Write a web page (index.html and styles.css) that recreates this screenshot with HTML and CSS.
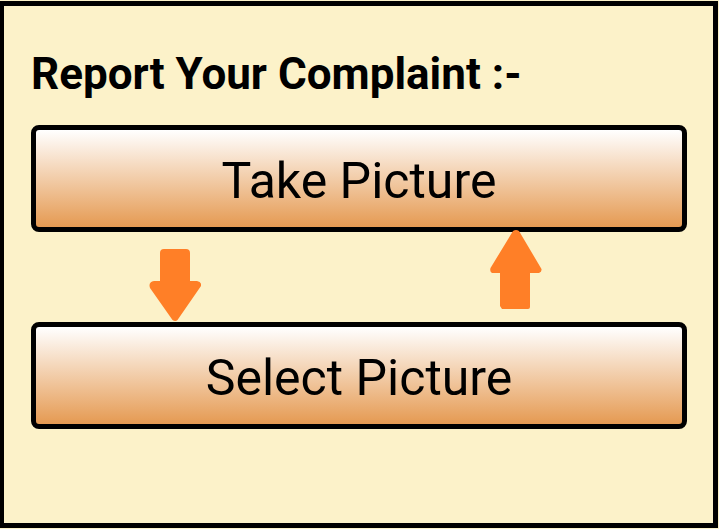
FILE: index.html
```html
<!DOCTYPE html>
<html lang="en">
<head>
<meta charset="utf-8">
<title>Report Your Complaint</title>
<link rel="stylesheet" href="styles.css">
</head>
<body>
<main class="panel">
  <h1 class="title">Report Your Complaint :-</h1>
  <button class="action" type="button">Take Picture</button>
  <div class="arrows">
    <svg class="arrow arrow-down" viewBox="0 0 52 80" aria-hidden="true"><path d="M15 0h22q4 0 4 4v28h7q5 1 4 5L28.500 71q-2 2-5 0L1 39q-2-6 4-7h6V4q0-4 4-4z"/></svg>
    <svg class="arrow arrow-up" viewBox="0 0 52 80" aria-hidden="true"><path d="M12 79h26q2 0 2-2V43h9q3-1 2.500-4L29 1q-3-2-6 0L.5 38q-1 4 1.500 5h8v33z"/></svg>
  </div>
  <button class="action" type="button">Select Picture</button>
</main>
</body>
</html>
```
FILE: styles.css
```css
* { box-sizing: border-box; }

body {
  margin: 0;
  padding: 1px 1px 1px 0;
  background: #fcf2c9;
  font-family: Roboto, sans-serif;
  color: #000;
}

.panel {
  min-height: calc(100vh - 2px);
  padding: 38px 26px 38px 27px;
  border: 5px solid #000;
  border-left-width: 4px;
}

.title {
  margin: 0 0 21px;
  font-size: 44px;
  line-height: 60px;
  font-weight: 700;
}

.action {
  display: block;
  width: 100%;
  height: 107px;
  padding: 4px 0 0;
  border: 5px solid #000;
  border-radius: 8px;
  background: linear-gradient(#fff, #e59a52);
  font: 400 50px/60px Roboto, sans-serif;
  color: #000;
}

.arrows {
  display: flex;
  justify-content: space-between;
  height: 90px;
  padding: 0 145px 0 118px;
}

.arrow {
  position: relative;
  width: 52px;
  height: 80px;
  fill: #ff7f27;
}

.arrow-down { margin-top: 17px; }
.arrow-up { margin-top: -2px; }
```
